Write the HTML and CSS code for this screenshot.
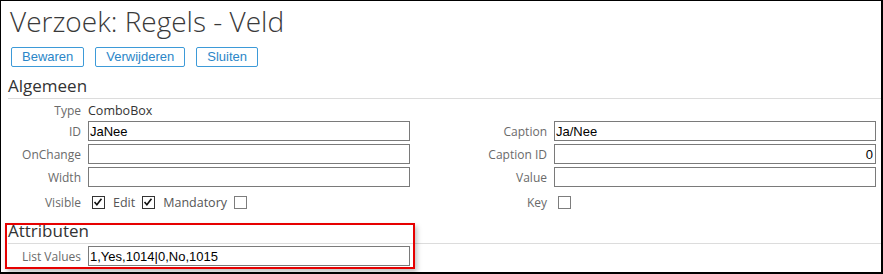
FILE: index.html
```html
<!DOCTYPE html>
<html lang="nl">
<head>
  <meta charset="UTF-8">
  <title>Verzoek: Regels - Veld</title>
  <link rel="stylesheet" href="styles.css">
</head>
<body>
  <div class="page">
    <h1 class="title">Verzoek: Regels - Veld</h1>

    <div class="toolbar">
      <button class="btn">Bewaren</button>
      <button class="btn">Verwijderen</button>
      <button class="btn">Sluiten</button>
    </div>

    <h2 class="section-title">Algemeen</h2>
    <div class="form">
      <label class="lbl type-row">Type</label>
      <span class="static type-row">ComboBox</span>
      <span></span>
      <span></span>

      <label class="lbl">ID</label>
      <input class="field" type="text" value="JaNee">
      <label class="lbl">Caption</label>
      <input class="field" type="text" value="Ja/Nee">

      <label class="lbl">OnChange</label>
      <input class="field" type="text" value="">
      <label class="lbl">Caption ID</label>
      <input class="field num" type="text" value="0">

      <label class="lbl">Width</label>
      <input class="field" type="text" value="">
      <label class="lbl">Value</label>
      <input class="field" type="text" value="">

      <label class="lbl">Visible</label>
      <div class="checks">
        <span class="box checked"><svg viewBox="0 0 13 13" width="11" height="11"><path d="M1.8 6 L4.6 9.2 L10 2.2" fill="none" stroke="#111" stroke-width="1.9"/></svg></span>
        <span class="check-lbl">Edit</span>
        <span class="box checked"><svg viewBox="0 0 13 13" width="11" height="11"><path d="M1.8 6 L4.6 9.2 L10 2.2" fill="none" stroke="#111" stroke-width="1.9"/></svg></span>
        <span class="check-lbl">Mandatory</span>
        <span class="box"></span>
      </div>
      <label class="lbl">Key</label>
      <div class="checks">
        <span class="box"></span>
      </div>
    </div>

    <div class="attributes">
      <h2 class="section-title">Attributen</h2>
      <div class="form">
        <label class="lbl">List Values</label>
        <input class="field" type="text" value="1,Yes,1014|0,No,1015">
      </div>
      <div class="marker"></div>
    </div>
  </div>
</body>
</html>
```

FILE: styles.css
```css
body {
  margin: 0;
  font-family: "Open Sans", sans-serif;
  color: #333;
  background: #fff;
}
.page {
  width: 883px;
  height: 274px;
  box-sizing: border-box;
  border-style: solid;
  border-color: #000;
  border-width: 1px 2px 2px 1px;
  overflow: hidden;
}
.title {
  margin: 2px 0 0;
  padding-left: 9px;
  font-size: 28px;
  font-weight: 300;
  line-height: 36px;
  color: #3a3a3a;
}
.toolbar {
  display: flex;
  gap: 11px;
  margin-top: 8px;
  padding-left: 10px;
}
.btn {
  height: 20px;
  padding: 0 10px;
  background: #fff;
  border: 1px solid #3d9ad8;
  border-radius: 2px;
  color: #2b86c8;
  font-family: "Liberation Sans", Arial, sans-serif;
  font-size: 13px;
  line-height: 18px;
}
.section-title {
  margin: 8px 0 0 7px;
  padding-bottom: 1px;
  border-bottom: 1px solid #dcdcdc;
  font-size: 17px;
  font-weight: 400;
  line-height: 22px;
  color: #333;
}
.form {
  display: grid;
  grid-template-columns: 73px 322px 130px 322px;
  grid-template-rows: 19px 20px 20px 20px 24px;
  column-gap: 7px;
  row-gap: 3px;
  padding-left: 7px;
}
.type-row {
  position: relative;
  top: 2px;
}
.lbl {
  font-size: 12px;
  color: #6a6a6a;
  text-align: right;
  align-self: center;
}
.static {
  font-size: 12.5px;
  color: #333;
  align-self: center;
}
.field {
  height: 20px;
  box-sizing: border-box;
  margin: 0;
  padding: 0 2px 0 1px;
  border: 1px solid #7a7a7a;
  border-radius: 0;
  font-family: "Liberation Sans", Arial, sans-serif;
  font-size: 13px;
  color: #000;
  outline: none;
}
.num {
  text-align: right;
}
.checks {
  display: flex;
  align-items: center;
  padding-left: 4px;
  padding-top: 1px;
}
.box {
  width: 13px;
  height: 13px;
  box-sizing: border-box;
  border: 1px solid #7d7d7d;
  display: flex;
  align-items: center;
  justify-content: center;
  background: #fff;
}
.box.checked {
  border-color: #333;
}
.check-lbl {
  font-size: 12.5px;
  color: #555;
  margin: 0 7px 0 8px;
}
.attributes {
  position: relative;
}
.attributes .section-title {
  margin-top: 6px;
}
.attributes .form {
  grid-template-rows: 20px;
  margin-top: 2px;
}
.marker {
  position: absolute;
  left: 4px;
  top: 3px;
  width: 410px;
  height: 46px;
  box-sizing: border-box;
  border: 2px solid #e60000;
  box-shadow: 2px 3px 5px rgba(0, 0, 0, 0.25);
  pointer-events: none;
}
```
